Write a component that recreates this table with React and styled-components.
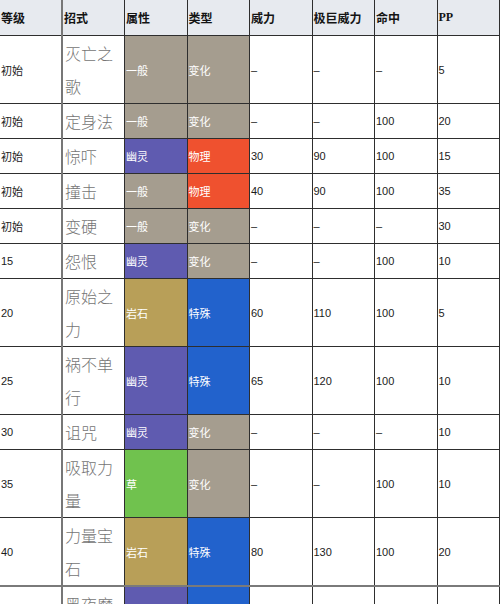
import React from "react";
import styled, { createGlobalStyle } from "styled-components";

const GlobalStyle = createGlobalStyle`
  html, body {
    margin: 0;
    padding: 0;
    background: #ffffff;
  }
  body {
    font-family: "Liberation Sans", "Noto Sans CJK SC", sans-serif;
    overflow: hidden;
  }
`;

const typeColors = {
  normal: "#a59d8f",
  ghost: "#5f5bb0",
  rock: "#b89f58",
  grass: "#70c24e",
  physical: "#ef512f",
  special: "#2262cc",
  status: "#a59d8f"
};

const typeNames = {
  normal: "一般",
  ghost: "幽灵",
  rock: "岩石",
  grass: "草",
  physical: "物理",
  special: "特殊",
  status: "变化"
};

const moves = [
  ["初始", "灭亡之歌", "normal", "status", "–", "–", "–", "5"],
  ["初始", "定身法", "normal", "status", "–", "–", "100", "20"],
  ["初始", "惊吓", "ghost", "physical", "30", "90", "100", "15"],
  ["初始", "撞击", "normal", "physical", "40", "90", "100", "35"],
  ["初始", "变硬", "normal", "status", "–", "–", "–", "30"],
  ["15", "怨恨", "ghost", "status", "–", "–", "100", "10"],
  ["20", "原始之力", "rock", "special", "60", "110", "100", "5"],
  ["25", "祸不单行", "ghost", "special", "65", "120", "100", "10"],
  ["30", "诅咒", "ghost", "status", "–", "–", "–", "10"],
  ["35", "吸取力量", "grass", "status", "–", "–", "100", "10"],
  ["40", "力量宝石", "rock", "special", "80", "130", "100", "20"],
  ["45", "黑夜魔影", "ghost", "special", "–", "–", "100", "15"]
];

const headers = ["等级", "招式", "属性", "类型", "威力", "极巨威力", "命中", "PP"];

function MoveTable() {
  return (
    <Table>
      <colgroup>
        {headers.map((h, i) => (
          <col key={i} style={{ width: "62.5px" }} />
        ))}
      </colgroup>
      <thead>
        <tr>
          {headers.map((h, i) => (
            <HeadCell key={h} $move={i === 1}>
              {h}
            </HeadCell>
          ))}
        </tr>
      </thead>
      <tbody>
        {moves.map((m, idx) => (
          <Row key={m[1]} $split={idx === moves.length - 1}>
            <Cell>{m[0]}</Cell>
            <MoveCell>{m[1]}</MoveCell>
            <TypeCell $color={typeColors[m[2]]}>{typeNames[m[2]]}</TypeCell>
            <TypeCell $color={typeColors[m[3]]}>{typeNames[m[3]]}</TypeCell>
            <Cell>{m[4]}</Cell>
            <Cell>{m[5]}</Cell>
            <Cell>{m[6]}</Cell>
            <Cell>{m[7]}</Cell>
          </Row>
        ))}
      </tbody>
    </Table>
  );
}

export default function App() {
  return (
    <>
      <GlobalStyle />
      <Page>
        <MoveTable />
      </Page>
    </>
  );
}

const Page = styled.div`
  width: 500px;
  overflow: hidden;
`;

const Table = styled.table`
  width: 501px;
  margin: -1px 0 0 -1px;
  border-collapse: collapse;
  table-layout: fixed;
`;

const HeadCell = styled.th`
  height: 35px;
  padding: 0 1px;
  background: #e7eaef;
  border: 1px solid #2e2e2e;
  border-left: ${p => (p.$move ? "2px solid #777" : "1px solid #2e2e2e")};
  text-align: left;
  font-family: "Liberation Serif", "Noto Sans CJK SC", serif;
  font-size: 12px;
  font-weight: 700;
  color: #141414;
  white-space: nowrap;
`;

const Row = styled.tr`
  td {
    border-top: ${p => (p.$split ? "2px solid #7a7a7a" : "1px solid #2e2e2e")};
  }
`;

const Cell = styled.td`
  padding: 0 1px;
  border: 1px solid #2e2e2e;
  font-family: "Liberation Sans", "Noto Sans CJK SC", sans-serif;
  font-size: 11px;
  color: #1c1c1c;
  vertical-align: middle;
`;

const MoveCell = styled(Cell)`
  border-left: 2px solid #777;
  padding: 1px 1px 0 2px;
  font-family: "Noto Sans CJK SC", sans-serif;
  font-size: 16px;
  font-weight: 300;
  line-height: 33px;
  color: #757575;
`;

const TypeCell = styled(Cell)`
  background: ${p => p.$color};
  color: #ffffff;
  font-family: "Noto Sans CJK SC", sans-serif;
`;
